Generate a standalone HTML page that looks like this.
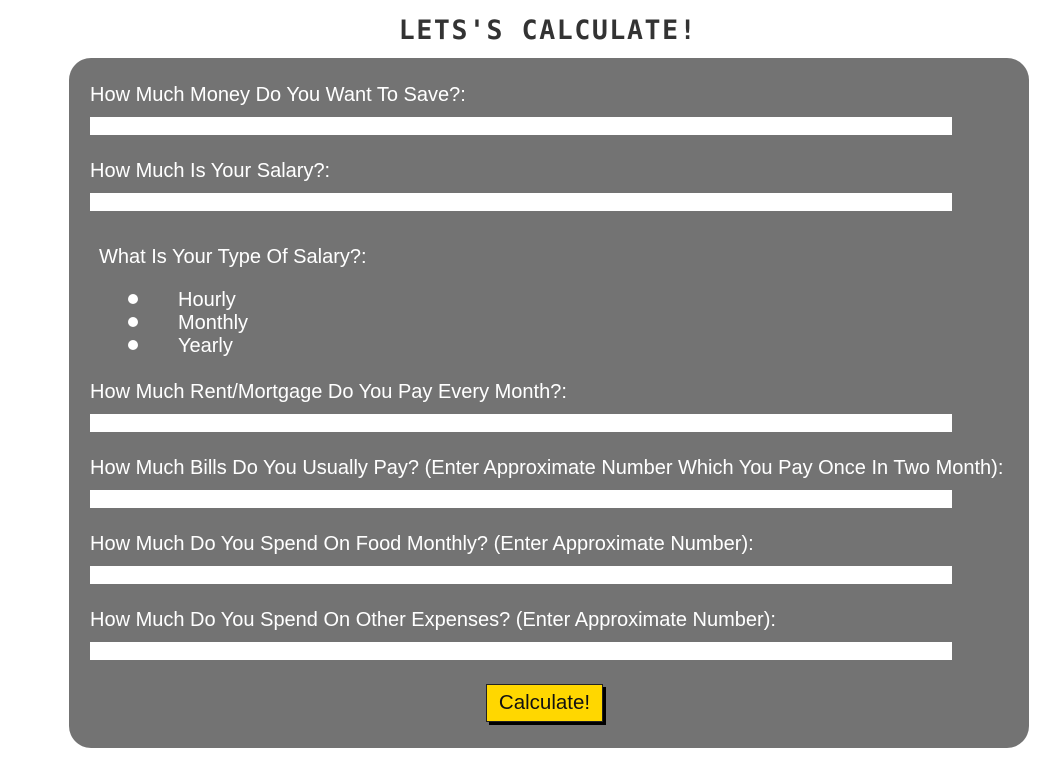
<!DOCTYPE html>
<html><head><meta charset="utf-8"><style>
body{margin:0;width:1058px;height:772px;background:#fff;position:relative;font-family:"Liberation Sans",Arial,sans-serif;overflow:hidden}
h1{position:absolute;left:0;width:1096px;top:15px;margin:0;text-align:center;font-family:"DejaVu Sans Mono","Liberation Mono",monospace;font-weight:bold;font-size:26.5px;color:#333;letter-spacing:1.6px}
.panel{position:absolute;left:69px;top:58px;width:960px;height:690px;background:#737373;border-radius:22px}
.l{position:absolute;color:#fff;font-size:20px;line-height:24px;white-space:nowrap}
.i{position:absolute;left:90px;width:862px;height:18px;background:#fff}
.d{position:absolute;left:128px;width:10px;height:10px;border-radius:50%;background:#fff}
.btn{position:absolute;left:486px;top:684px;width:117px;height:38px;background:#ffd700;border:1px solid #222;box-shadow:3px 3px 0 #000;font-size:20.5px;line-height:36px;text-align:center;color:#111;box-sizing:border-box}
</style></head><body>
<h1>LETS'S CALCULATE!</h1>
<div class="panel"></div>
<div class="l" style="left:90px;top:83px">How Much Money Do You Want To Save?:</div>
<div class="i" style="top:117px"></div>
<div class="l" style="left:90px;top:159px">How Much Is Your Salary?:</div>
<div class="i" style="top:193px"></div>
<div class="l" style="left:99px;top:245px">What Is Your Type Of Salary?:</div>
<div class="d" style="top:294px"></div><div class="l" style="left:178px;top:288px">Hourly</div>
<div class="d" style="top:317px"></div><div class="l" style="left:178px;top:311px">Monthly</div>
<div class="d" style="top:340px"></div><div class="l" style="left:178px;top:334px">Yearly</div>
<div class="l" style="left:90px;top:380px">How Much Rent/Mortgage Do You Pay Every Month?:</div>
<div class="i" style="top:414px"></div>
<div class="l" style="left:90px;top:456px">How Much Bills Do You Usually Pay? (Enter Approximate Number Which You Pay Once In Two Month):</div>
<div class="i" style="top:490px"></div>
<div class="l" style="left:90px;top:532px">How Much Do You Spend On Food Monthly? (Enter Approximate Number):</div>
<div class="i" style="top:566px"></div>
<div class="l" style="left:90px;top:608px">How Much Do You Spend On Other Expenses? (Enter Approximate Number):</div>
<div class="i" style="top:642px"></div>
<div class="btn">Calculate!</div>
</body></html>
